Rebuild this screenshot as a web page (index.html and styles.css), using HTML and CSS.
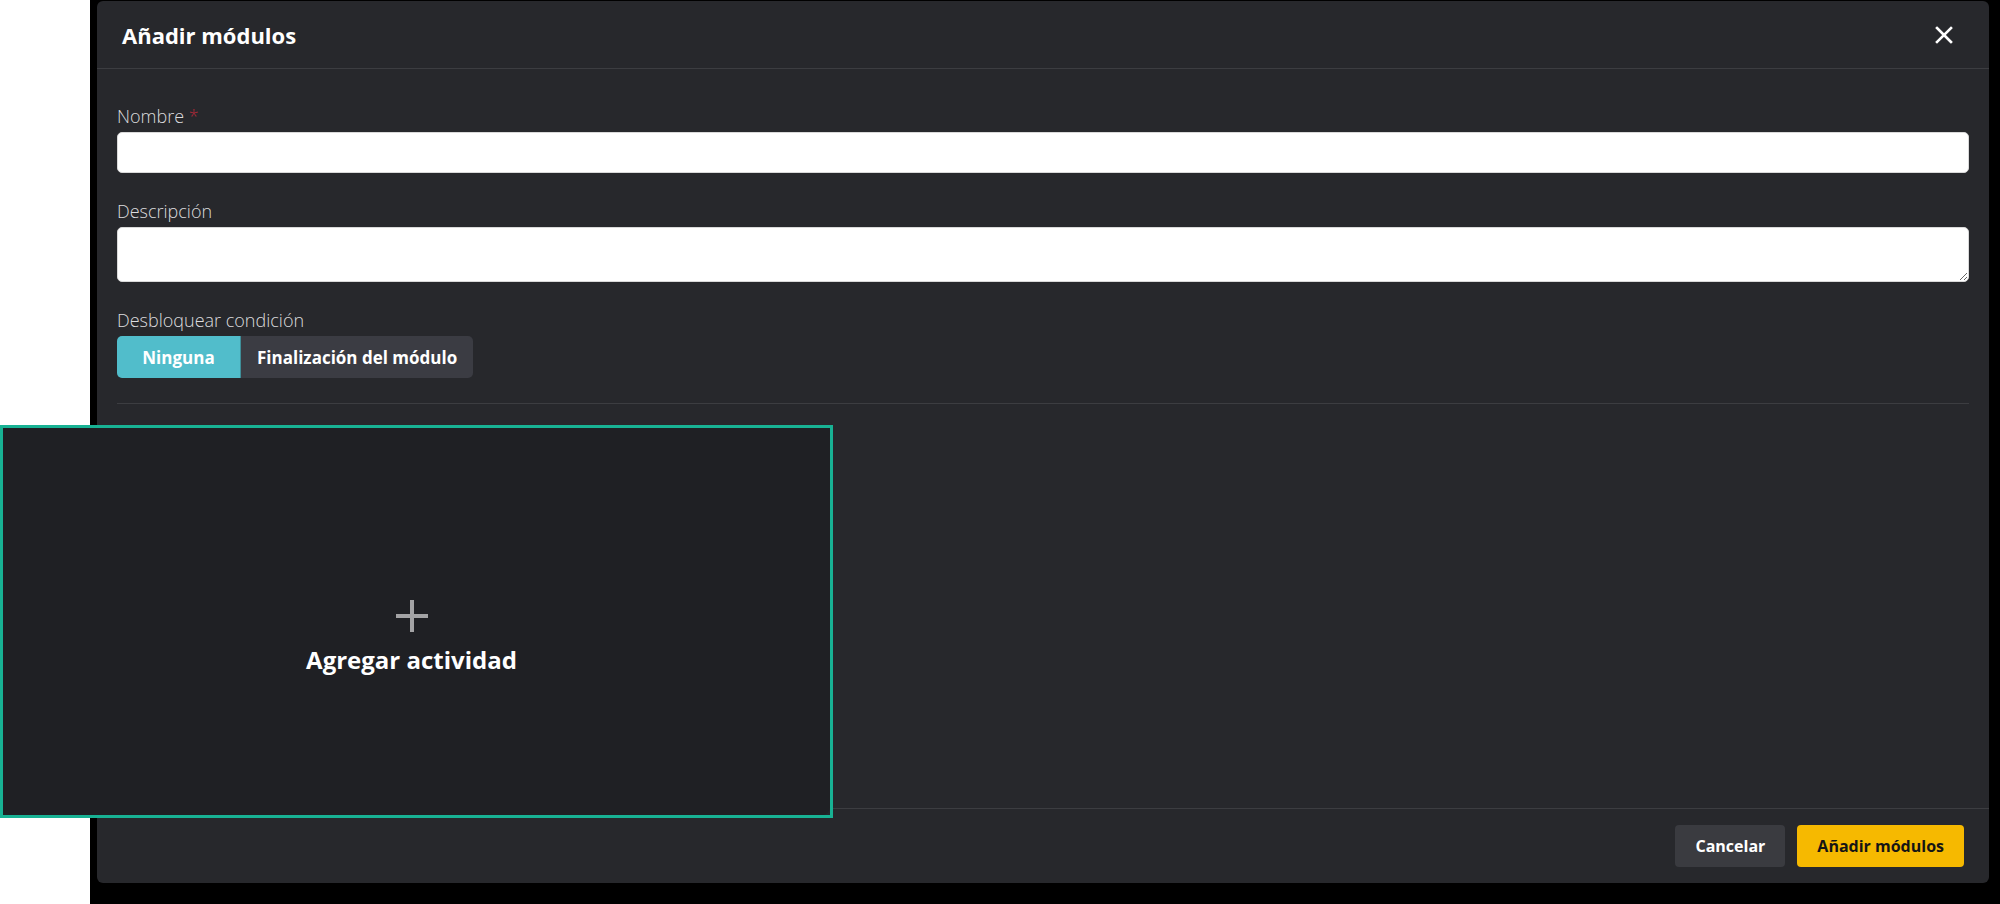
FILE: index.html
```html
<!DOCTYPE html>
<html lang="es">
<head>
    <meta charset="UTF-8">
    <title>Añadir módulos</title>
    <link rel="stylesheet" href="styles.css">
</head>
<body>
<div class="page-edge"></div>
<div class="overlay">
    <div class="modal">
        <div class="modal-header">
            <h2>Añadir módulos</h2>
            <button class="close" type="button" aria-label="Cerrar">
                <svg width="18" height="18" viewBox="0 0 18 18">
                    <path d="M2 2L16 16M16 2L2 16" stroke="#fff" stroke-width="2.6" stroke-linecap="square"/>
                </svg>
            </button>
        </div>
        <div class="modal-body">
            <div class="field">
                <label>Nombre <span class="req">*</span></label>
                <input type="text">
            </div>
            <div class="field">
                <label>Descripción</label>
                <textarea></textarea>
            </div>
            <div class="field">
                <label>Desbloquear condición</label>
                <div class="toggle">
                    <button class="toggle-btn active" type="button">Ninguna</button>
                    <button class="toggle-btn" type="button">Finalización del módulo</button>
                </div>
            </div>
            <hr class="sep">
        </div>
        <div class="modal-footer">
            <button class="btn btn-cancel" type="button">Cancelar</button>
            <button class="btn btn-primary" type="button">Añadir módulos</button>
        </div>
    </div>
</div>

<!-- tarjeta de actividad (arrastrable) -->
<div class="activity-slot">
    <div class="activity-card">
        <svg class="plus" width="34" height="34" viewBox="0 0 34 34">
            <path d="M17 1V33M1 17H33" stroke="#a3a3a5" stroke-width="4"/>
        </svg>
        <span>Agregar actividad</span>
    </div>
</div>
</body>
</html>
```

FILE: styles.css
```css
*{
    padding: 0;
    margin: 0;
    box-sizing: border-box;
}
body{
    display: flex;
    height: 904px;
    background-color: #fff;
    font-family: "Open Sans", "Noto Sans", sans-serif;
    overflow: hidden;
}
.page-edge{
    width: 90px;
    flex-shrink: 0;
}
.overlay{
    flex: 1;
    background-color: #000;
    padding: 1px 11px 21px 7px;
    display: flex;
}
.modal{
    flex: 1;
    display: flex;
    flex-direction: column;
    background-color: #27282c;
    border-radius: 6px;
}
.modal-header{
    height: 68px;
    display: flex;
    align-items: center;
    justify-content: space-between;
    padding: 0 36px 0 25px;
    border-bottom: 1px solid #3c3d41;
}
.modal-header h2{
    color: #fff;
    font-size: 22px;
    font-weight: 700;
}
.close{
    background: none;
    border: 0;
    width: 18px;
    height: 18px;
    display: flex;
    cursor: pointer;
}
.modal-body{
    flex: 1;
    padding: 35px 20px 0;
}
.field{
    margin-bottom: 26px;
}
.field label{
    display: block;
    color: #dcdcde;
    font-size: 18px;
    line-height: 24px;
    font-weight: 300;
    margin-bottom: 4px;
}
.field .req{
    color: #b3283a;
}
.field input,
.field textarea{
    display: block;
    width: 100%;
    border: 1px solid #d9d9d9;
    border-radius: 5px;
    background-color: #fff;
    font-family: inherit;
    font-size: 16px;
}
.field input{
    height: 41px;
}
.field textarea{
    height: 55px;
    resize: vertical;
}
.toggle{
    display: inline-flex;
    border-radius: 5px;
    overflow: hidden;
}
.toggle-btn{
    height: 42px;
    border: 0;
    padding: 0 16px;
    background-color: #3b3c43;
    color: #fff;
    font-family: inherit;
    font-size: 17px;
    font-weight: 700;
}
.toggle-btn.active{
    width: 124px;
    background-color: #51bdcb;
    border-right: 1px solid #3f8f99;
}
.sep{
    border: 0;
    border-top: 1px solid #3c3d41;
    margin-top: -1px;
}
.modal-footer{
    height: 75px;
    border-top: 1px solid #3c3d41;
    display: flex;
    justify-content: flex-end;
    align-items: center;
    gap: 12px;
    padding: 0 25px;
}
.btn{
    height: 42px;
    padding: 0 20px;
    border: 0;
    border-radius: 4px;
    font-family: inherit;
    font-size: 16px;
    font-weight: 700;
    cursor: pointer;
}
.btn-cancel{
    background-color: #3a3b40;
    color: #fff;
}
.btn-primary{
    background-color: #f6b900;
    color: #151515;
}
.activity-slot{
    position: absolute;
    left: 0;
    top: 425px;
    width: 833px;
    height: 393px;
    border: 3px solid #18b294;
    background-color: #24252a;
}
.activity-card{
    height: 100%;
    background-color: #1f2024;
    border-radius: 0 0 8px 0;
    display: flex;
    flex-direction: column;
    align-items: center;
    justify-content: center;
    gap: 10px;
    padding: 31px 10px 0 0;
    color: #fff;
    font-size: 24px;
    font-weight: 700;
}
.plus{
    display: block;
}
```
